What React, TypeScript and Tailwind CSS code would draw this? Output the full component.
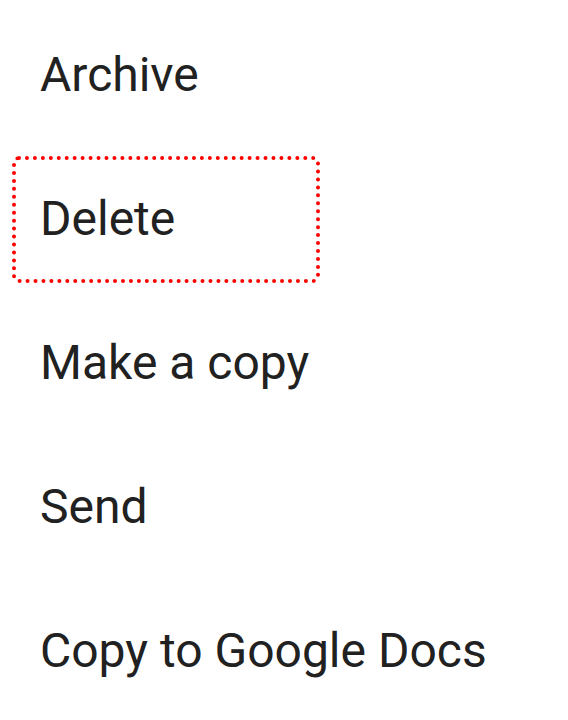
export default function App() {
  const items = ["Archive", "Delete", "Make a copy", "Send", "Copy to Google Docs"];
  return (
    <div className="w-[568px] h-[720px] bg-white overflow-hidden pt-[3px]" style={{ fontFamily: "Roboto, 'Liberation Sans', sans-serif" }}>
      {items.map((t) => (
        <div key={t} className="h-[144px] flex items-center">
          {t === "Delete" ? (
            <div className="ml-[12px] w-[308px] h-[127px] flex items-center pl-[24px] border-[4px] border-dotted border-[#ff0000] rounded-[7px] text-[48px] text-[#212121]">
              {t}
            </div>
          ) : (
            <div className="pl-[40px] text-[48px] text-[#212121]">{t}</div>
          )}
        </div>
      ))}
    </div>
  );
}
